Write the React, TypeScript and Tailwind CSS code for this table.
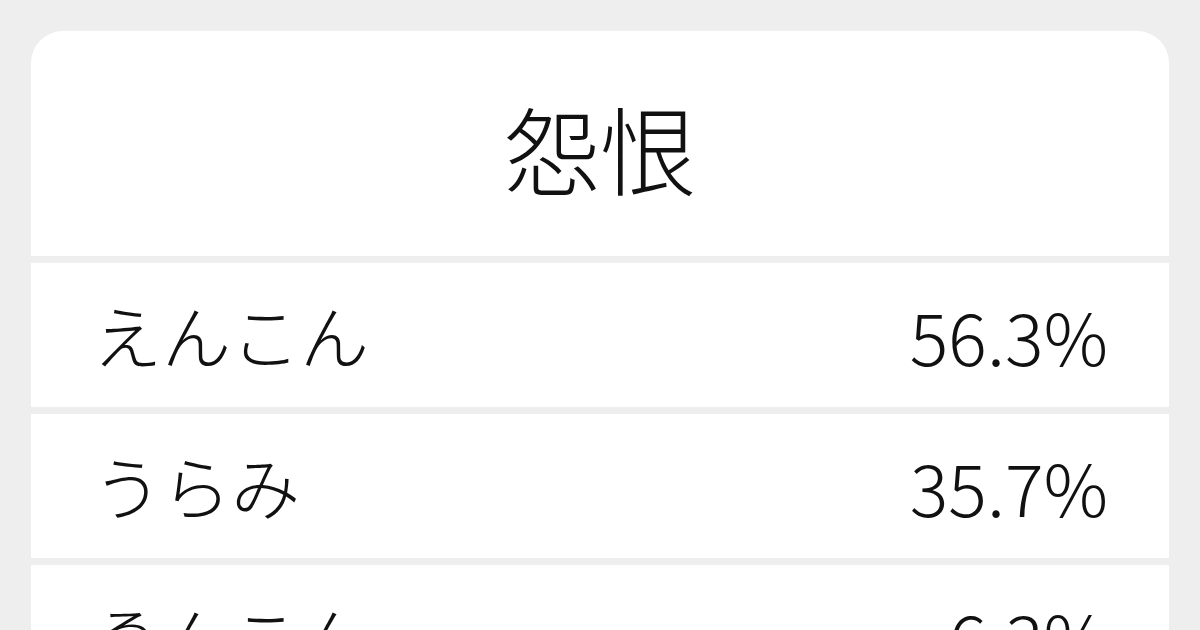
const rows = [
  { yomi: "えんこん", pct: "56.3%" },
  { yomi: "うらみ", pct: "35.7%" },
  { yomi: "ゑんこん", pct: "6.3%" },
];

export default function App() {
  return (
    <div
      className="w-[1200px] h-[630px] overflow-hidden bg-[#eeeeee] pt-[31px] px-[31px] text-[#111111]"
      style={{ fontFamily: '"Noto Sans CJK JP", "Noto Sans", sans-serif' }}
    >
      <div className="flex flex-col gap-[7px] rounded-t-[32px] overflow-hidden">
        <div className="h-[225px] bg-white flex items-center justify-center">
          <span className="text-[96px] font-light leading-none pt-[7px]">怨恨</span>
        </div>
        {rows.map((r) => (
          <div
            key={r.yomi}
            className="h-[144px] shrink-0 bg-white flex items-center justify-between pl-[62px] pr-[61px]"
          >
            <span className="text-[69px] font-light leading-none pb-[2px]">{r.yomi}</span>
            <span className="text-[72px] font-light leading-none">{r.pct}</span>
          </div>
        ))}
      </div>
    </div>
  );
}
